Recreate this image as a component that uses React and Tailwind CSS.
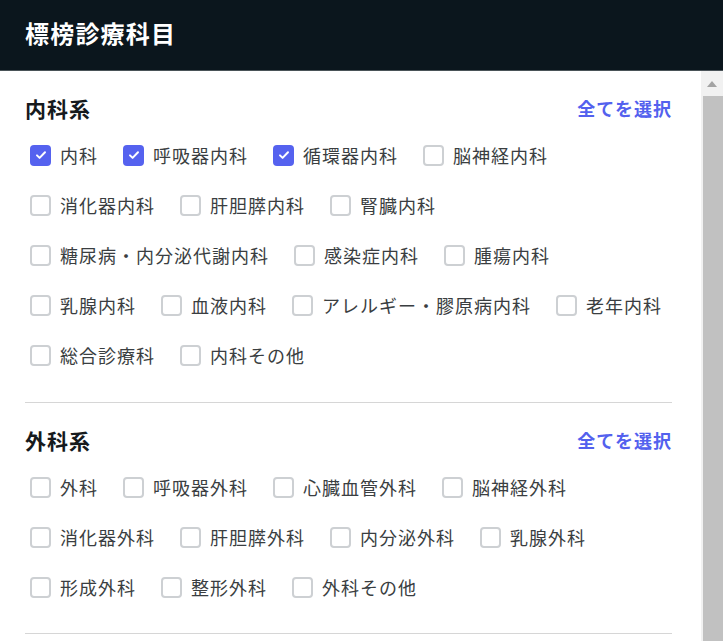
import React from "react";

const sections = [
  {
    title: "内科系",
    pb: "pb-[32px]",
    items: [
      ["内科", true],
      ["呼吸器内科", true],
      ["循環器内科", true],
      ["脳神経内科", false],
      ["消化器内科", false],
      ["肝胆膵内科", false],
      ["腎臓内科", false],
      ["糖尿病・内分泌代謝内科", false],
      ["感染症内科", false],
      ["腫瘍内科", false],
      ["乳腺内科", false],
      ["血液内科", false],
      ["アレルギー・膠原病内科", false],
      ["老年内科", false],
      ["総合診療科", false],
      ["内科その他", false],
    ],
  },
  {
    title: "外科系",
    pb: "pb-[31px]",
    items: [
      ["外科", false],
      ["呼吸器外科", false],
      ["心臓血管外科", false],
      ["脳神経外科", false],
      ["消化器外科", false],
      ["肝胆膵外科", false],
      ["内分泌外科", false],
      ["乳腺外科", false],
      ["形成外科", false],
      ["整形外科", false],
      ["外科その他", false],
    ],
  },
];

function Checkbox({ checked }) {
  if (checked) {
    return (
      <span className="ml-[5px] flex h-[21px] w-[21px] shrink-0 items-center justify-center rounded-[4px] bg-[#5562ef]">
        <svg width="14" height="14" viewBox="0 0 14 14" fill="none">
          <path d="M3 7.4l2.6 2.5L11 4.3" stroke="white" strokeWidth="2" strokeLinecap="round" strokeLinejoin="round" />
        </svg>
      </span>
    );
  }
  return <span className="ml-[5px] block h-[21px] w-[21px] shrink-0 rounded-[4px] border-2 border-[#cdd0d3] bg-white" />;
}

function Section({ title, items, pb }) {
  return (
    <section className={`border-b border-[#d6d6d6] pt-[22px] ${pb}`}>
      <div className="flex h-[30px] items-center justify-between">
        <h2 className="text-[21px] font-bold leading-[30px] tracking-[1px] text-[#161a1d]">{title}</h2>
        <button className="text-[18px] font-bold leading-[30px] tracking-[1px] text-[#5361ee]">全てを選択</button>
      </div>
      <div className="mt-[17px] flex flex-wrap gap-x-[20px] gap-y-[20px]">
        {items.map(([label, checked]) => (
          <label key={label} className="flex h-[30px] items-center gap-[9px]">
            <Checkbox checked={checked} />
            <span className="text-[18px] leading-[30px] tracking-[1px] text-[#3a3e41]">{label}</span>
          </label>
        ))}
      </div>
    </section>
  );
}

export default function App() {
  return (
    <div
      className="flex h-screen w-full flex-col overflow-hidden bg-white"
      style={{ fontFamily: '"Noto Sans CJK JP", "Noto Sans", sans-serif' }}
    >
      <header className="flex h-[71px] shrink-0 items-center border-b border-[#4a5358] bg-[#0b161d] pb-[4px] pl-[25px]">
        <h1 className="text-[24px] font-bold leading-[32px] tracking-[1.2px] text-white">標榜診療科目</h1>
      </header>
      <div className="flex min-h-0 flex-1">
        <main className="min-w-0 flex-1 overflow-hidden px-[25px] pr-[29px]">
          {sections.map((s) => (
            <Section key={s.title} {...s} />
          ))}
        </main>
        <div className="flex w-[22px] shrink-0 flex-col bg-[#f1f1f1]">
          <div className="flex h-[25px] items-center justify-center">
            <svg width="10" height="6" viewBox="0 0 10 6">
              <path d="M5 0L10 6H0z" fill="#a3a3a3" />
            </svg>
          </div>
          <div className="ml-[2px] flex-1 bg-[#c1c1c1]" />
        </div>
      </div>
    </div>
  );
}
